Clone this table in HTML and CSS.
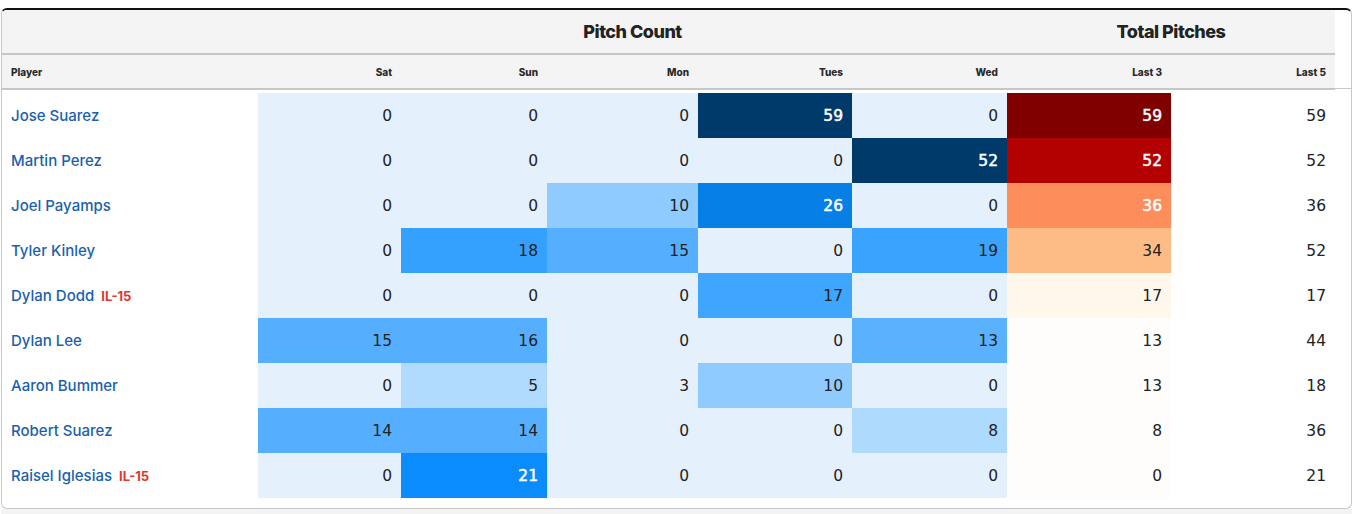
FILE: index.html
```html
<!DOCTYPE html>
<html lang="en">
<head>
<meta charset="utf-8">
<title>Pitch Count</title>
<link rel="stylesheet" href="styles.css">
</head>
<body>
<div class="page">
  <div class="card">
    <div class="head">
      <div class="hc group"></div>
      <div class="hc group span5">Pitch Count</div>
      <div class="hc group span2">Total Pitches</div>
      <div class="hc-extra"></div>

      <div class="hc sub left">Player</div>
      <div class="hc sub">Sat</div>
      <div class="hc sub">Sun</div>
      <div class="hc sub">Mon</div>
      <div class="hc sub">Tues</div>
      <div class="hc sub">Wed</div>
      <div class="hc sub">Last 3</div>
      <div class="hc sub">Last 5</div>
      <div class="hc-extra rule"></div>
    </div>

    <div class="body">
      <div class="name">Jose Suarez</div>
      <div class="c h0">0</div><div class="c h0">0</div><div class="c h0">0</div><div class="c hmax inv">59</div><div class="c h0">0</div>
      <div class="c r59 inv">59</div><div class="c">59</div>

      <div class="name">Martin Perez</div>
      <div class="c h0">0</div><div class="c h0">0</div><div class="c h0">0</div><div class="c h0">0</div><div class="c hmax inv">52</div>
      <div class="c r52 inv">52</div><div class="c">52</div>

      <div class="name">Joel Payamps</div>
      <div class="c h0">0</div><div class="c h0">0</div><div class="c h10">10</div><div class="c h26 inv">26</div><div class="c h0">0</div>
      <div class="c r36 inv">36</div><div class="c">36</div>

      <div class="name">Tyler Kinley</div>
      <div class="c h0">0</div><div class="c h18">18</div><div class="c h15">15</div><div class="c h0">0</div><div class="c h19">19</div>
      <div class="c r34">34</div><div class="c">52</div>

      <div class="name">Dylan Dodd <span class="il">IL-15</span></div>
      <div class="c h0">0</div><div class="c h0">0</div><div class="c h0">0</div><div class="c h17">17</div><div class="c h0">0</div>
      <div class="c r17">17</div><div class="c">17</div>

      <div class="name">Dylan Lee</div>
      <div class="c h15">15</div><div class="c h15">16</div><div class="c h0">0</div><div class="c h0">0</div><div class="c h13">13</div>
      <div class="c rlow">13</div><div class="c">44</div>

      <div class="name">Aaron Bummer</div>
      <div class="c h0">0</div><div class="c h5">5</div><div class="c h0">3</div><div class="c h10">10</div><div class="c h0">0</div>
      <div class="c rlow">13</div><div class="c">18</div>

      <div class="name">Robert Suarez</div>
      <div class="c h15">14</div><div class="c h15">14</div><div class="c h0">0</div><div class="c h0">0</div><div class="c h8">8</div>
      <div class="c rlow">8</div><div class="c">36</div>

      <div class="name">Raisel Iglesias <span class="il">IL-15</span></div>
      <div class="c h0">0</div><div class="c h21 inv">21</div><div class="c h0">0</div><div class="c h0">0</div><div class="c h0">0</div>
      <div class="c rlow">0</div><div class="c">21</div>
    </div>
  </div>
  <div class="footer-band"></div>
</div>
</body>
</html>
```

FILE: styles.css
```css
* { box-sizing: border-box; }

html, body {
  margin: 0;
  padding: 0;
  background: #ffffff;
}

.page {
  padding: 8px 2px 0 1px;
  font-family: Inter, "Noto Sans", sans-serif;
  color: #222;
}

.card {
  width: 1351px;
  border: 1px solid #c8c8c8;
  border-top: 2px solid #111;
  border-radius: 6px;
  padding-bottom: 10px;
  background: #fff;
  overflow: hidden;
}

.head {
  display: grid;
  grid-template-columns: 256px 143px 146px 151px 154px 155px 164px 164px 1fr;
  grid-template-rows: 45px 35px;
}

.hc {
  background: #f4f4f4;
  border-bottom: 2px solid #c6c6c6;
  display: flex;
  align-items: center;
  justify-content: flex-end;
  padding-right: 9px;
}

.hc-extra.rule {
  border-bottom: 1px solid #c8c8c8;
  margin-bottom: 1px;
}

.group {
  justify-content: center;
  padding: 0;
  font-size: 18px;
  font-weight: 800;
  letter-spacing: -0.5px;
  color: #222;
}

.span5 { grid-column: span 5; }
.span2 { grid-column: span 2; }

.sub {
  font-size: 10px;
  font-weight: 800;
  color: #2a2a2a;
}

.sub.left {
  justify-content: flex-start;
  padding-left: 9px;
}

.body {
  display: grid;
  grid-template-columns: 256px 143px 146px 151px 154px 155px 164px 164px;
  grid-auto-rows: 45px;
  padding-top: 3px;
}

.name {
  display: flex;
  align-items: center;
  padding-left: 9px;
  font-size: 15px;
  font-weight: 500;
  color: #1b5fad;
  white-space: nowrap;
}

.il {
  margin-left: 7px;
  font-size: 13px;
  font-weight: 700;
  color: #e0372c;
}

.c {
  display: flex;
  align-items: center;
  justify-content: flex-end;
  padding-right: 9px;
  font-family: "DejaVu Sans", "Liberation Sans", sans-serif;
  font-size: 15.5px;
  color: #222;
}

.inv {
  color: #fff;
  -webkit-text-stroke: 0.5px #fff;
}

.h0 { background: #e4f1fd; }
.h5 { background: #b0dbfe; }
.h8 { background: #aedafe; }
.h10 { background: #8fcbff; }
.h13 { background: #5ab1fd; }
.h15 { background: #56affe; }
.h17 { background: #3ea6fe; }
.h18 { background: #35a1fe; }
.h19 { background: #3aa3fd; }
.h21 { background: #0a8cff; }
.h26 { background: #067fe7; }
.hmax { background: #003a6b; }

.r59 { background: #800000; }
.r52 { background: #b30000; }
.r36 { background: #fd8d5a; }
.r34 { background: #fdbc85; }
.r17 { background: #fff7ec; }
.rlow { background: #fffdfb; }

.footer-band {
  height: 10px;
  background: #f3f3f3;
}
```
